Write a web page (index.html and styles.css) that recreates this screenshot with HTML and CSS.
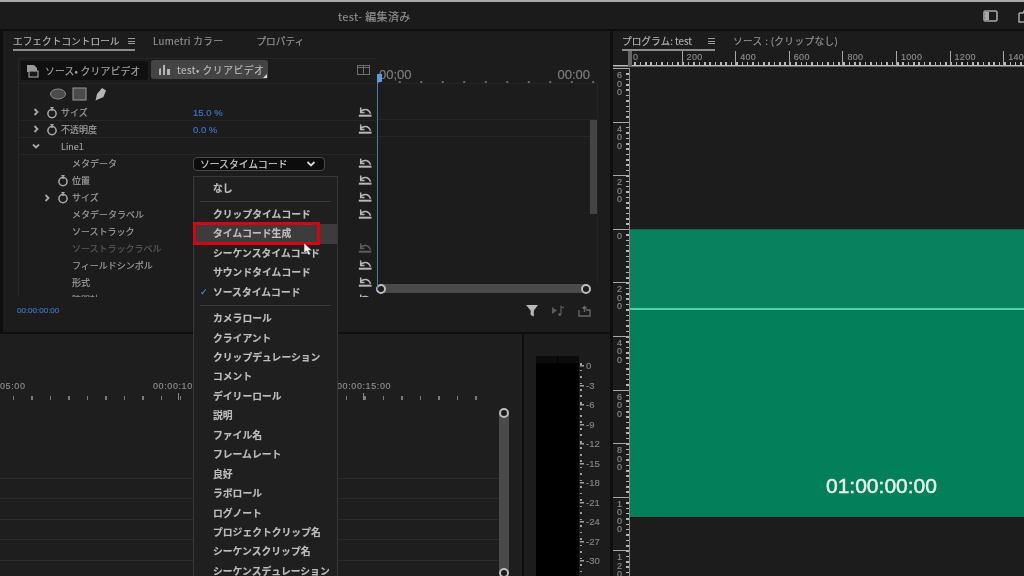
FILE: index.html
```html
<!DOCTYPE html>
<html lang="ja">
<head>
<meta charset="utf-8">
<title>test - 編集済み</title>
<link rel="stylesheet" href="styles.css">
</head>
<body>
<svg class="defs" width="0" height="0">
  <symbol id="reset" viewBox="0 0 14 10"><path d="M2.700 .6v4.900h3.800M3 4.300C5.500 1.600 10.800 1.400 12.500 6.800" fill="none" stroke="currentColor" stroke-width="1.500"/><path d="M.8 8.700h12.700" fill="none" stroke="currentColor" stroke-width="2"/></symbol>
  <symbol id="watch" viewBox="0 0 10 12"><circle cx="5" cy="7" r="3.800" fill="none" stroke="currentColor" stroke-width="1.400"/><path d="M3.500 1.500h3M5 2v2.500" stroke="currentColor" stroke-width="1.300"/></symbol>
  <symbol id="chev" viewBox="0 0 8 8"><path d="M2.500 1l3 3-3 3" fill="none" stroke="currentColor" stroke-width="1.800"/></symbol>
  <symbol id="down" viewBox="0 0 10 8"><path d="M1.500 2l3.500 3.500L8.500 2" fill="none" stroke="currentColor" stroke-width="1.800"/></symbol>
</svg>
<div class="app">
  <header class="titlebar">
    <span class="title">test- 編集済み</span>
    <svg class="win-icon" width="15" height="12" viewBox="0 0 15 12"><rect x="1" y="1" width="13" height="10" rx="1.500" fill="none" stroke="#a8a8a8" stroke-width="1.600"/><rect x="2" y="2" width="4" height="8" fill="#a8a8a8"/></svg>
    <svg class="win-icon cut" width="12" height="14" viewBox="0 0 12 14"><path d="M1 4h4l1-2h5M1 4v9h11" fill="none" stroke="#a8a8a8" stroke-width="1.500"/></svg>
  </header>
  <div class="workspace">
    <div class="left">
      <section class="effects">
        <nav class="tabs">
          <span class="tab active">エフェクトコントロール<i class="burger"></i></span>
          <span class="tab lumetri">Lumetri カラー</span>
          <span class="tab">プロパティ</span>
        </nav>
        <div class="panes">
          <div class="controls">
            <div class="src-tabs">
              <span class="src-tab">
                <svg width="13" height="14" viewBox="0 0 13 14"><path d="M1 1h7l3 3v4H1z" fill="#9a9a9a"/><rect x="3" y="7" width="9" height="6" fill="#1a1a1a" stroke="#9a9a9a" stroke-width="1.200"/></svg>
                ソース• クリアビデオ
              </span>
              <span class="src-tab current">
                <svg width="13" height="12" viewBox="0 0 13 12"><path d="M1 11V5l2-1v7zM5 11V1h2v10zM9 11V5h3v6z" fill="#b5b5b5"/></svg>
                test• クリアビデオ
              </span>
              <svg class="toggle" width="13" height="10" viewBox="0 0 13 10"><rect x=".5" y=".5" width="12" height="9" fill="none" stroke="#6e6e6e"/><path d="M6.500 0v10M0 2.500h13" stroke="#6e6e6e"/></svg>
            </div>
            <div class="shapes">
              <svg width="60" height="14" viewBox="0 0 60 14"><ellipse cx="8" cy="7" rx="7.500" ry="5" fill="#4b4b4b" stroke="#8a8a8a"/><rect x="23" y="1" width="13" height="12" fill="#4b4b4b" stroke="#9a9a9a"/><path d="M45.500 13.500l1.500-6.500 5-6 4 2.500-2.500 6.500z" fill="#b5b5b5"/></svg>
            </div>
            <div class="row ruled"><span class="lead l1"><svg class="chev"><use href="#chev"/></svg><svg class="watch"><use href="#watch"/></svg></span><span class="name">サイズ</span><span class="val blue">15.0 %</span><svg class="reset"><use href="#reset"/></svg></div>
            <div class="row ruled"><span class="lead l1"><svg class="chev"><use href="#chev"/></svg><svg class="watch"><use href="#watch"/></svg></span><span class="name">不透明度</span><span class="val blue">0.0 %</span><svg class="reset"><use href="#reset"/></svg></div>
            <div class="row ruled"><span class="lead l1"><svg class="chev open"><use href="#chev"/></svg><i class="slot"></i></span><span class="name">Line1</span></div>
            <div class="row"><span class="lead l2"><i class="slot-c"></i><i class="slot"></i></span><span class="name sub">メタデータ</span>
              <span class="val"><span class="select">ソースタイムコード<svg class="sel-arrow"><use href="#down"/></svg></span></span><svg class="reset"><use href="#reset"/></svg></div>
            <div class="row"><span class="lead l2"><i class="slot-c"></i><svg class="watch"><use href="#watch"/></svg></span><span class="name sub">位置</span><svg class="reset end"><use href="#reset"/></svg></div>
            <div class="row"><span class="lead l2"><svg class="chev"><use href="#chev"/></svg><svg class="watch"><use href="#watch"/></svg></span><span class="name sub">サイズ</span><svg class="reset end"><use href="#reset"/></svg></div>
            <div class="row"><span class="lead l2"><i class="slot-c"></i><i class="slot"></i></span><span class="name sub">メタデータラベル</span><svg class="reset end"><use href="#reset"/></svg></div>
            <div class="row"><span class="lead l2"><i class="slot-c"></i><i class="slot"></i></span><span class="name sub">ソーストラック</span></div>
            <div class="row dim"><span class="lead l2"><i class="slot-c"></i><i class="slot"></i></span><span class="name sub">ソーストラックラベル</span><svg class="reset end"><use href="#reset"/></svg></div>
            <div class="row"><span class="lead l2"><i class="slot-c"></i><i class="slot"></i></span><span class="name sub">フィールドシンボル</span><svg class="reset end"><use href="#reset"/></svg></div>
            <div class="row"><span class="lead l2"><i class="slot-c"></i><i class="slot"></i></span><span class="name sub">形式</span><svg class="reset end"><use href="#reset"/></svg></div>
            <div class="row"><span class="lead l2"><i class="slot-c"></i><i class="slot"></i></span><span class="name sub">時間軸</span><svg class="reset end"><use href="#reset"/></svg></div>
          </div>
          <div class="keyframes">
            <div class="kf-ruler"><span>00;00</span><span>00:00</span></div>
            <div class="kf-tracks">
              <div class="kf-gap"></div><div class="kf-line"></div>
              <div class="kf-vbar"></div>
            </div>
            <div class="kf-hbar"><i class="knob"></i><i class="knob"></i></div>
            <div class="playhead"></div>
          </div>
        </div>
        <footer class="fx-foot">
          <span class="fx-time">00:00:00:00</span>
          <svg class="foot-icon" width="12" height="13" viewBox="0 0 13 14"><path d="M0 1h13L8.500 7v6.500L5 12V7z" fill="#b8b8b8"/></svg>
          <svg class="foot-icon" width="14" height="12" viewBox="0 0 14 12"><path d="M1 2l5 3.500L1 9z" fill="#5c5c5c"/><path d="M10 9V1.500l3 1.500" fill="none" stroke="#5c5c5c" stroke-width="1.200"/><circle cx="8.800" cy="9.500" r="1.500" fill="#5c5c5c"/></svg>
          <svg class="foot-icon" width="13" height="12" viewBox="0 0 13 12"><path d="M1 5v6h11V5H8M6.500 7V2M4.500 3.500l2-2 2 2" fill="none" stroke="#666" stroke-width="1.400"/></svg>
        </footer>
      </section>
      <div class="lower">
        <section class="timeline">
          <div class="tl-labels"><span>05:00</span><span>00:00:10:00</span><span>00:00:15:00</span></div>
          <div class="tl-ticks"></div>
          <div class="tl-body">
            <div class="tl-tracks"><div></div><div></div><div></div><div></div><div></div></div>
            <div class="tl-vbar"><i class="knob"></i><i class="knob"></i></div>
          </div>
        </section>
        <section class="meter">
          <div class="meter-bar"><div class="meter-cap"><i></i><i></i></div></div>
          <div class="meter-scale"><span>0</span><span>-3</span><span>-6</span><span>-9</span><span>-12</span><span>-15</span><span>-18</span><span>-21</span><span>-24</span><span>-27</span><span>-30</span></div>
        </section>
      </div>
    </div>
    <section class="program">
      <nav class="tabs prog-tabs">
        <span class="tab active prog">プログラム: test<i class="burger"></i></span>
        <span class="tab spaced">ソース : (クリップなし)</span>
      </nav>
      <div class="hruler"><span>0</span><span>200</span><span>400</span><span>600</span><span>800</span><span>1000</span><span>1200</span><span>1400</span></div>
      <div class="viewer">
        <div class="vruler"><span>600</span><span>400</span><span>200</span><span>0</span><span>200</span><span>400</span><span>600</span><span>800</span><span>1000</span><span>1200</span></div>
        <div class="canvas">
          <div class="stage">
            <div class="stage-top"></div>
            <div class="stage-line"></div>
            <div class="stage-bottom"><span class="tc">01:00:00:00</span></div>
          </div>
        </div>
      </div>
    </section>
  </div>
  <div class="menu">
    <div class="item">なし</div>
    <div class="sep"></div>
    <div class="item">クリップタイムコード</div>
    <div class="item hi">タイムコード生成</div>
    <div class="item">シーケンスタイムコード</div>
    <div class="item">サウンドタイムコード</div>
    <div class="item checked">ソースタイムコード</div>
    <div class="sep"></div>
    <div class="item">カメラロール</div>
    <div class="item">クライアント</div>
    <div class="item">クリップデュレーション</div>
    <div class="item">コメント</div>
    <div class="item">デイリーロール</div>
    <div class="item">説明</div>
    <div class="item">ファイル名</div>
    <div class="item">フレームレート</div>
    <div class="item">良好</div>
    <div class="item">ラボロール</div>
    <div class="item">ログノート</div>
    <div class="item">プロジェクトクリップ名</div>
    <div class="item">シーケンスクリップ名</div>
    <div class="item">シーケンスデュレーション</div>
  </div>
  <svg class="cursor" width="11" height="14" viewBox="0 0 11 14"><path d="M1 1v10l2.500-2 2 4 2-1-2-3.500H9z" fill="#f2f2f2" stroke="#333" stroke-width=".5"/></svg>
</div>
</body>
</html>
```
FILE: styles.css
```css
*, *::before, *::after { box-sizing: border-box; }
html, body { margin: 0; padding: 0; background: #0e0e0e; }
body { font-family: "Noto Sans CJK JP", "Liberation Sans", sans-serif; color: #a8a8a8; font-size: 9px; -webkit-text-stroke: .15px currentColor; }
.defs { position: absolute; }
i { display: block; font-style: normal; }

.app { position: relative; width: 1024px; height: 576px; overflow: hidden; display: flex; flex-direction: column; background: #0e0e0e; filter: blur(.35px); }

.titlebar { height: 29px; flex: none; display: flex; align-items: center; border-top: 2px solid #a9a9a9; background: #1b1b1b; padding-left: 338px; }
.title { font-size: 11px; letter-spacing: .35px; color: #8f8f8f; }
.win-icon { margin-left: auto; margin-right: 26px; }
.win-icon.cut { margin-left: -6px; margin-right: -6px; }

.workspace { flex: 1; min-height: 0; display: flex; margin-top: 2px; gap: 3px; }
.left { width: 610px; flex: none; display: flex; flex-direction: column; gap: 2px; }

.effects { height: 301px; flex: none; margin-left: 3px; background: #1c1c1c; display: flex; flex-direction: column; }
.tabs { height: 20px; flex: none; display: flex; align-items: flex-start; padding: 3px 0 0 10px; }
.tab { position: relative; font-size: 9.7px; line-height: 14px; color: #949494; white-space: nowrap; }
.tab.active { width: 122px; height: 17px; color: #b4b4b4; border-bottom: 2px solid #8c8c8c; }
.tab.lumetri { margin: 0 33px 0 18px; letter-spacing: .35px; }
.tab.spaced { letter-spacing: .35px; }
.burger { position: absolute; right: 0; top: 4px; width: 7px; height: 6px; border-top: 1px solid #9a9a9a; border-bottom: 1px solid #9a9a9a; background: linear-gradient(#9a9a9a, #9a9a9a) center / 100% 1px no-repeat; }

.panes { height: 239px; flex: none; margin: 7px 0 0 15px; display: flex; width: 579px; }
.controls { width: 358px; flex: none; overflow: hidden; border-left: 1px solid #262626; border-top: 1px solid #262626; }

.src-tabs { height: 25px; display: flex; align-items: flex-start; gap: 3px; padding: 1px 0 0 2px; border-bottom: 1px solid #262626; }
.src-tab { height: 19px; display: flex; align-items: center; gap: 6px; padding-left: 5px; font-size: 9.8px; letter-spacing: .2px; color: #a6a6a6; background: #101010; border-radius: 2px; width: 127px; margin-top: 1px; white-space: nowrap; }
.src-tab.current { position: relative; width: 117px; margin-top: 0; padding-left: 7px; background: #444; color: #bdbdbd; border-radius: 3px; letter-spacing: .5px; }
.src-tab.current::after { content: ""; position: absolute; right: 1px; bottom: 1px; width: 4px; height: 4px; border: 2px solid transparent; border-right-color: #ddd; border-bottom-color: #ddd; }
.toggle { margin: 5px 6px 0 auto; }

.shapes { height: 20px; display: flex; align-items: center; padding-left: 31px; }
.row { height: 17px; display: flex; align-items: center; position: relative; white-space: nowrap; color: #a0a0a0; }
.row.ruled { border-bottom: 1px solid #262626; }
.row.dim { color: #5d5d5d; }
.lead { display: flex; align-items: center; flex: none; }
.lead.l1 { padding-left: 10px; }
.lead.l2 { padding-left: 21px; }
.chev { width: 14px; height: 8px; color: #a8a8a8; }
.chev.open { transform: rotate(90deg); transform-origin: 7px 4px; }
.watch { width: 18px; height: 13px; color: #a8a8a8; }
.slot { width: 18px; height: 1px; }
.slot-c { width: 14px; height: 1px; }
.name { flex: none; }
.val { position: absolute; left: 174px; font-family: "Liberation Sans", sans-serif; }
.blue { color: #3f78c9; font-size: 9.5px; }
.select { display: flex; align-items: center; width: 132px; height: 14px; padding: 0 6px; background: #0c0c0c; border: 1px solid #4a4a4a; border-radius: 4px; font-family: "Noto Sans CJK JP", sans-serif; font-size: 9.8px; color: #d4d4d4; }
.sel-arrow { width: 10px; height: 8px; margin-left: auto; margin-right: 2px; color: #d4d4d4; }
.reset { position: absolute; left: 339px; top: 3px; width: 14px; height: 10px; color: #b8b8b8; }
.row.dim .reset { color: #5d5d5d; }

.keyframes { position: relative; width: 221px; flex: none; margin-left: 1px; display: flex; flex-direction: column; }
.kf-ruler { height: 26px; flex: none; display: flex; justify-content: space-between; align-items: flex-end; padding: 0 8px 0 2px; font-family: "Liberation Sans", sans-serif; font-size: 13px; color: #7e7e7e; border-bottom: 1px solid #242424; line-height: 17px; background: radial-gradient(circle, #6a6a6a 0 .8px, transparent 1px) 12px 21.500px / 21.500px 4px repeat-x; }
.kf-tracks { position: relative; flex: 1; border-right: 1px solid #242424; }
.kf-gap { height: 36px; border-bottom: 1px solid #262626; }
.kf-line { height: 17px; border-bottom: 1px solid #262626; }
.kf-vbar { position: absolute; right: 0; top: 36px; width: 7px; height: 94px; background: #454545; }
.kf-hbar { height: 9px; flex: none; margin: 0 12px 4px 4px; display: flex; justify-content: space-between; align-items: center; background: #4a4a4a; }
.knob { width: 10px; height: 10px; flex: none; border-radius: 50%; border: 2.500px solid #bdbdbd; background: #1c1c1c; }
.kf-hbar .knob:first-child { margin-left: -5px; }
.kf-hbar .knob:last-child { margin-right: -5px; }
.playhead { position: absolute; left: 0; top: 16px; height: 216px; width: 1px; background: #4f79b8; }
.playhead::before { content: ""; position: absolute; left: 0; top: 0; width: 5px; height: 8px; background: #5b9ae6; }

.fx-foot { flex: 1; display: flex; align-items: center; padding: 0 19px 8px 14px; gap: 13px; }
.fx-time { margin-right: auto; font-family: "Liberation Sans", sans-serif; font-size: 8px; color: #3f78c9; }

.lower { flex: 1; min-height: 0; display: flex; gap: 2px; }
.timeline { width: 522px; flex: none; background: #1e1e1e; display: flex; flex-direction: column; overflow: hidden; }
.tl-labels { height: 58px; flex: none; display: grid; grid-template-columns: 153px 184px auto; align-items: end; font-family: "Liberation Sans", sans-serif; font-size: 9px; letter-spacing: .6px; line-height: 12px; color: #8c8c8c; }
.tl-ticks { height: 7px; flex: none; width: 492px; margin-top: 1px;
  background:
    linear-gradient(#8a8a8a, #8a8a8a) 178px 0 / 1px 100% no-repeat,
    linear-gradient(#8a8a8a, #8a8a8a) 363px 0 / 1px 100% no-repeat,
    repeating-linear-gradient(90deg, transparent 0 13px, #7a7a7a 13px 14.500px, transparent 14.500px 18.500px) 0 3px / 100% 4px no-repeat; }
.tl-body { flex: 1; min-height: 0; display: flex; padding-top: 13px; }
.tl-tracks { width: 499px; flex: none; padding-top: 65px; }
.tl-tracks div { height: 20.400px; border-top: 1px solid #2b2b2b; }
.tl-vbar { width: 10px; height: 160px; flex: none; display: flex; flex-direction: column; justify-content: space-between; align-items: center; background: #4a4a4a; }
.tl-vbar .knob:first-child { margin-top: -5px; }
.tl-vbar .knob:last-child { margin-bottom: -5px; }

.meter { flex: 1; background: #1c1c1c; display: flex; padding: 22px 0 0 12px; overflow: hidden; }
.meter-bar { width: 43px; flex: none; background: #000; }
.meter-cap { height: 7px; display: flex; gap: 1px; }
.meter-cap i { flex: 1; background: #0b0b0b; }
.meter-scale { flex: 1; display: flex; flex-direction: column; padding-left: 1px; font-family: "Liberation Sans", sans-serif; font-size: 9.500px; color: #858585;
  background: repeating-linear-gradient(#a0a0a0 0 1.500px, transparent 1.500px 6.500px) 1px 7px / 2px 100% no-repeat; }
.meter-scale span { height: 19.500px; line-height: 19.500px; flex: none; padding-left: 6px; background: linear-gradient(#a0a0a0, #a0a0a0) 0 center / 4px 1.500px no-repeat; }

.program { flex: 1; min-width: 0; background: #1c1c1c; display: flex; flex-direction: column; }
.prog-tabs { padding-left: 9px; }
.tab.prog { width: 93px; margin-right: 18px; }
.tab.prog .burger { right: 0; }
.hruler { height: 17px; flex: none; display: flex; padding-left: 15px; font-family: "Liberation Sans", sans-serif; font-size: 9px; letter-spacing: .3px; color: #8c8c8c; overflow: hidden;
  background:
    linear-gradient(#b8b8b8, #b8b8b8) 0 14px / 100% 1.500px no-repeat,
    repeating-linear-gradient(90deg, #b8b8b8 0 1.500px, transparent 1.500px 5.360px) 16px 11px / 100% 3px no-repeat; }
.hruler span { width: 53.600px; flex: none; height: 15px; padding: 1px 0 0 4px; line-height: 11px; border-left: 1px solid #a8a8a8; }
.hruler span:first-child { border-left-width: 4px; border-left-color: #666; padding-left: 1px; }

.viewer { flex: 1; min-height: 0; display: flex; }
.vruler { width: 17px; flex: none; display: flex; flex-direction: column; border-right: 1px solid #8a8a8a; font-family: "Liberation Sans", sans-serif; font-size: 9px; color: #8c8c8c; overflow: hidden;
  background: repeating-linear-gradient(#b8b8b8 0 1.500px, transparent 1.500px 5.360px) right 0 / 3px 100% no-repeat; }
.vruler span { display: block; height: 53.600px; flex: none; width: 100%; border-top: 1.500px solid #a8a8a8; padding: 2px 6px 0 4px; line-height: 8.500px; word-break: break-all; }

.canvas { flex: 1; min-width: 0; padding-top: 161px; background: #1c1c1c; }
.stage { height: 289px; display: flex; flex-direction: column; border-bottom: 1px solid #0d0d0d; }
.stage-top { height: 79px; flex: none; background: #08825e; border-top: 1px solid #0c6e50; }
.stage-line { height: 1.500px; flex: none; background: #4fd3a5; }
.stage-bottom { flex: 1; background: #037f5a; display: flex; align-items: flex-end; padding: 0 0 21px 196px; }
.tc { font-family: "Liberation Sans", sans-serif; font-size: 21px; line-height: 20px; color: #e4f1ec; -webkit-text-stroke: .5px #e4f1ec; }

.menu { position: absolute; left: 193px; top: 176px; width: 145px; padding-top: 1.500px; background: #1f1f1f; border: 1px solid #383838; border-bottom: 0; }
.item { position: relative; height: 19.450px; line-height: 18px; padding-left: 19px; font-size: 9.800px; font-weight: 700; color: #bdbdbd; white-space: nowrap; }
.sep { height: 7px; margin: 0 6px; background: linear-gradient(#3a3a3a, #3a3a3a) center / 100% 1px no-repeat; }
.item.hi { background: #3c3c3c; }
.item.hi::after { content: ""; position: absolute; left: -1px; top: -2px; width: 127px; height: 23px; border: 3px solid #dc0010; }
.item.checked::before { content: "✓"; position: absolute; left: 6px; top: 0; color: #4f86d6; font-family: "DejaVu Sans", sans-serif; font-size: 9px; font-weight: 700; }
.cursor { position: absolute; left: 303px; top: 242px; }
```
